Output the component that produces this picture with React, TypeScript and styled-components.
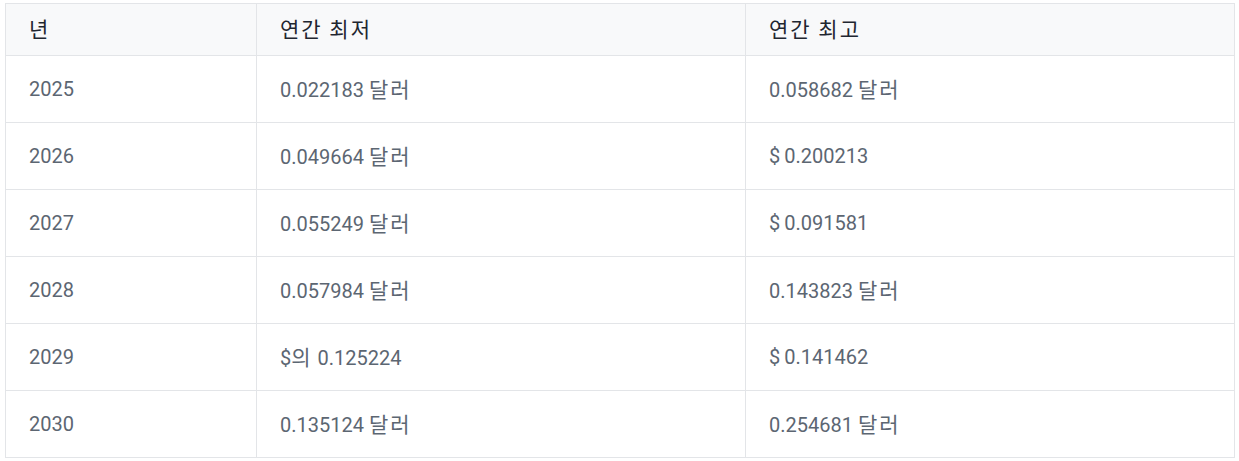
import styled, { createGlobalStyle } from "styled-components";

const GlobalStyle = createGlobalStyle`
  body {
    margin: 0;
    background: #ffffff;
    font-family: Roboto, "Noto Sans CJK KR", sans-serif;
  }
`;

const rows = [
  { year: "2025", low: "0.022183 달러", high: "0.058682 달러" },
  { year: "2026", low: "0.049664 달러", high: "$\u20090.200213" },
  { year: "2027", low: "0.055249 달러", high: "$\u20090.091581" },
  { year: "2028", low: "0.057984 달러", high: "0.143823 달러" },
  { year: "2029", low: "$의 0.125224", high: "$\u20090.141462" },
  { year: "2030", low: "0.135124 달러", high: "0.254681 달러" },
];

// Hangul is set a little larger and looser than the Latin digits
function Mixed({ text }: { text: string }) {
  const parts = text.split(/([\uAC00-\uD7A3]+(?: [\uAC00-\uD7A3]+)*)/);
  return (
    <>
      {parts.map((p, i) =>
        /[\uAC00-\uD7A3]/.test(p) ? <Hangul key={i}>{p}</Hangul> : <span key={i}>{p}</span>
      )}
    </>
  );
}

function App() {
  return (
    <>
      <GlobalStyle />
      <Wrapper>
        <Table>
          <colgroup>
            <col style={{ width: 251 }} />
            <col style={{ width: 489 }} />
            <col />
          </colgroup>
          <thead>
            <tr>
              <HeadCell><Mixed text="년" /></HeadCell>
              <HeadCell><Mixed text="연간 최저" /></HeadCell>
              <HeadCell><Mixed text="연간 최고" /></HeadCell>
            </tr>
          </thead>
          <tbody>
            {rows.map((r) => (
              <tr key={r.year}>
                <Cell>{r.year}</Cell>
                <Cell><Mixed text={r.low} /></Cell>
                <Cell><Mixed text={r.high} /></Cell>
              </tr>
            ))}
          </tbody>
        </Table>
      </Wrapper>
    </>
  );
}
export default App;

const Wrapper = styled.div`
  padding: 3px 4px 0 5px;
`;

const Table = styled.table`
  width: 1230px;
  border-collapse: collapse;
  table-layout: fixed;
  font-size: 20px;
  line-height: 24px;
`;

const Hangul = styled.span`
  font-family: "Noto Sans CJK KR", sans-serif;
  font-size: 21px;
  letter-spacing: 2px;
  line-height: 24px;
`;

const HeadCell = styled.th`
  height: 49px;
  padding: 0 0 2px 23px;
  text-align: left;
  font-weight: 400;
  color: #1f2630;
  background: #f8f9fa;
  border: 1px solid #e3e5e8;
`;

const Cell = styled.td`
  height: 66px;
  padding: 0 0 0 23px;
  color: #5c6672;
  border: 1px solid #e3e5e8;
`;
